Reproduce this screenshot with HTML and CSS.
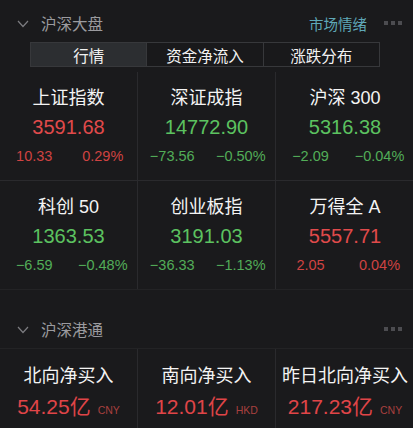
FILE: index.html
```html
<!DOCTYPE html>
<html>
  <head>
    <meta charset="utf-8">
    <title>沪深大盘</title>
    <link rel="stylesheet" href="styles.css">
  </head>
  <body>
    <div class="section-head">
      <svg class="chevron" width="12" height="8" viewBox="0 0 12 8">
        <polyline points="1 1 6 6.5 11 1" fill="none" stroke="currentColor" stroke-width="1.2" />
      </svg>
      <div class="head-title">沪深大盘</div>
      <div class="head-link">市场情绪</div>
      <div class="dots"><span></span><span></span><span></span></div>
    </div>

    <div class="tabs">
      <div class="tab active">行情</div>
      <div class="tab">资金净流入</div>
      <div class="tab">涨跌分布</div>
    </div>

    <div class="grid">
      <div class="cell">
        <div class="name">上证指数</div>
        <div class="value up">3591.68</div>
        <div class="change up"><span>10.33</span><span>0.29%</span></div>
      </div>
      <div class="cell">
        <div class="name">深证成指</div>
        <div class="value down">14772.90</div>
        <div class="change down"><span>−73.56</span><span>−0.50%</span></div>
      </div>
      <div class="cell">
        <div class="name">沪深 300</div>
        <div class="value down">5316.38</div>
        <div class="change down"><span>−2.09</span><span>−0.04%</span></div>
      </div>
      <div class="cell">
        <div class="name">科创 50</div>
        <div class="value down">1363.53</div>
        <div class="change down"><span>−6.59</span><span>−0.48%</span></div>
      </div>
      <div class="cell">
        <div class="name">创业板指</div>
        <div class="value down">3191.03</div>
        <div class="change down"><span>−36.33</span><span>−1.13%</span></div>
      </div>
      <div class="cell">
        <div class="name">万得全 A</div>
        <div class="value up">5557.71</div>
        <div class="change up"><span>2.05</span><span>0.04%</span></div>
      </div>
    </div>

    <div class="section-head second">
      <svg class="chevron" width="12" height="8" viewBox="0 0 12 8">
        <polyline points="1 1 6 6.5 11 1" fill="none" stroke="currentColor" stroke-width="1.2" />
      </svg>
      <div class="head-title">沪深港通</div>
      <div class="dots"><span></span><span></span><span></span></div>
    </div>

    <div class="grid flow">
      <div class="cell">
        <div class="name">北向净买入</div>
        <div class="amount">54.25亿<small>CNY</small></div>
      </div>
      <div class="cell">
        <div class="name">南向净买入</div>
        <div class="amount">12.01亿<small>HKD</small></div>
      </div>
      <div class="cell">
        <div class="name">昨日北向净买入</div>
        <div class="amount">217.23亿<small>CNY</small></div>
      </div>
    </div>
  </body>
</html>
```

FILE: styles.css
```css
body {
  margin: 0;
  background: #1a1a1c;
  color: #ffffff;
  font-family: "Liberation Sans", "Noto Sans CJK SC", sans-serif;
  overflow: hidden;
}
.section-head {
  height: 34px;
  padding: 6px 11px 0 17px;
  display: flex;
  align-items: center;
}
.section-head.second {
  height: 38px;
  padding-top: 20px;
}
.chevron {
  color: #7c7c80;
  margin-right: 12px;
  margin-top: 1px;
}
.head-title {
  font-family: "Noto Sans CJK SC", sans-serif;
  font-size: 15.5px;
  color: #9b9b9f;
  flex: 1;
}
.head-link {
  font-family: "Noto Sans CJK SC", sans-serif;
  font-size: 14.5px;
  color: #5fa8b8;
  margin-right: 17px;
}
.dots {
  display: flex;
  gap: 3px;
}
.dots span {
  width: 4px;
  height: 4px;
  background: #4c4c50;
}
.tabs {
  margin: 2px 33px 0 30px;
  height: 25px;
  display: flex;
  border: 1px solid #37383b;
  box-sizing: border-box;
}
.tab {
  flex: 1;
  display: flex;
  align-items: center;
  justify-content: center;
  font-family: "Noto Sans CJK SC", sans-serif;
  font-size: 15.5px;
  color: #f2f2f2;
  background: #19191b;
}
.tab + .tab {
  border-left: 1px solid #37383b;
}
.tab.active {
  background: #2c2e31;
}
.grid {
  margin-top: 5px;
  display: grid;
  grid-template-columns: 137px 137px 138px;
  grid-auto-rows: 108px;
  gap: 1px;
  background: #2a2a2d;
  border-bottom: 1px solid #232325;
}
.grid.flow {
  margin-top: 0;
  border-top: 1px solid #232325;
  grid-auto-rows: 80px;
}
.cell {
  background: #1a1a1c;
  padding-top: 14px;
  text-align: center;
}
.flow .cell {
  padding-top: 15px;
}
.name {
  font-family: "Liberation Sans", "Noto Sans CJK SC", sans-serif;
  font-size: 18px;
  line-height: 24px;
  color: #f4f4f4;
}
.value {
  font-size: 20px;
  line-height: 34px;
}
.change {
  display: grid;
  grid-template-columns: 1fr 1fr;
  font-size: 14.5px;
  line-height: 24px;
}
.value.up {
  color: #e04a4b;
}
.value.down {
  color: #5cc260;
}
.change.up {
  color: #cf4342;
}
.change.down {
  color: #52ad58;
}
.amount {
  font-size: 21px;
  line-height: 38px;
  color: #e04548;
}
.amount small {
  font-size: 10.5px;
  color: #a8403f;
  margin-left: 7px;
}
```
